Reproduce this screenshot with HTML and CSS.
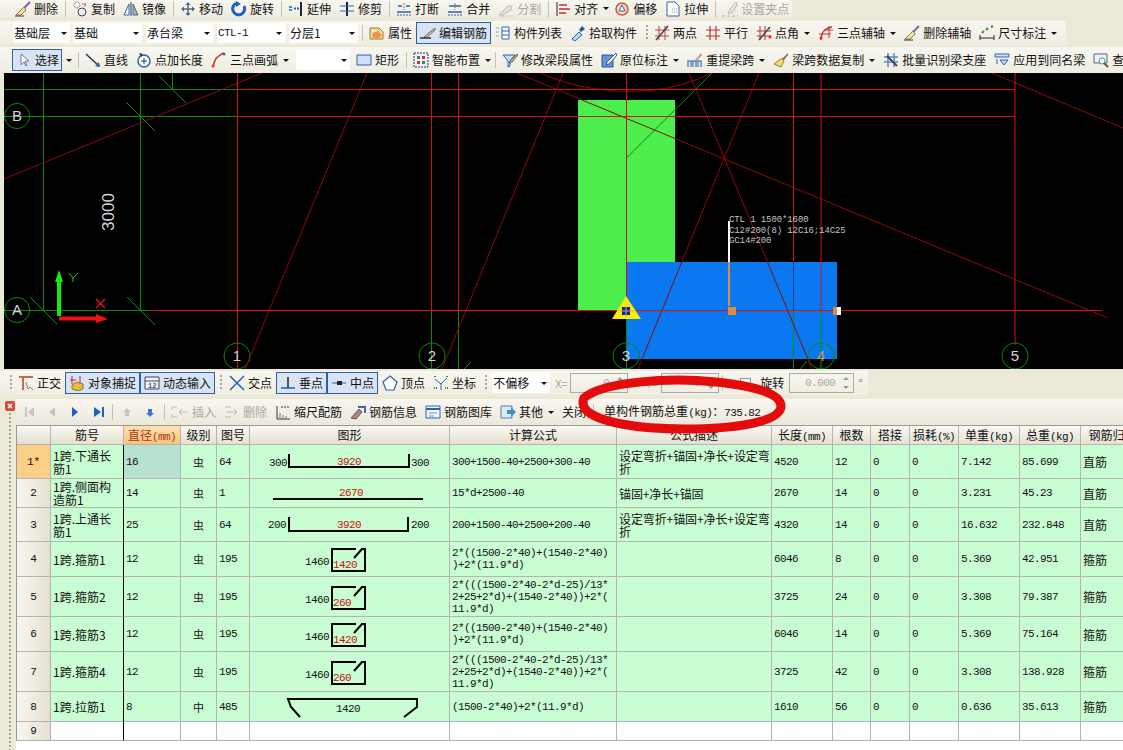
FILE: index.html
```html
<!DOCTYPE html>
<html lang="zh">
<head>
<meta charset="utf-8">
<title>钢筋编辑</title>
<link rel="stylesheet" href="styles.css">
</head>
<body>
<div class="app">

<div class="bar bar1">
  <span class="it"><svg class="ic" viewBox="0 0 16 16"><path d="M15 1L8 8" stroke="#7a5fb0" stroke-width="2"/><path d="M9 6l2 3-5 5-5 0z" fill="#f3e2a0" stroke="#8a7a40"/><path d="M0 15h9" stroke="#333"/></svg>删除</span><i class="sp"></i>
  <span class="it"><svg class="ic" viewBox="0 0 16 16"><circle cx="5" cy="4" r="3" fill="none" stroke="#777" stroke-dasharray="2 1"/><circle cx="10" cy="11" r="4" fill="none" stroke="#446"/><path d="M10 3h4l-2 3" fill="none" stroke="#c55"/></svg>复制</span>
  <span class="it"><svg class="ic" viewBox="0 0 16 16"><path d="M8 1v14" stroke="#333"/><path d="M6 3v11H1z" fill="#fff" stroke="#2a62b0"/><path d="M10 3v11h5z" fill="#9bb" stroke="#567"/></svg>镜像</span><i class="sp"></i>
  <span class="it"><svg class="ic" viewBox="0 0 16 16"><path d="M8 1l2.500 3h-5zM8 15l2.500-3h-5zM1 8l3-2.500v5zM15 8l-3-2.500v5z" fill="#2a62b0"/><path d="M8 3v10M3 8h10" stroke="#667" stroke-width="1.500"/></svg>移动</span>
  <span class="it"><svg class="ic" viewBox="0 0 16 16"><path d="M6 2A6 6 0 1 0 13 5" fill="none" stroke="#1f5fc0" stroke-width="3"/><path d="M5 0v6l5-3z" fill="#1f5fc0"/></svg>旋转</span><i class="sp"></i>
  <span class="it"><svg class="ic" viewBox="0 0 16 16"><path d="M13 1v14" stroke="#223" stroke-width="2"/><path d="M1 6h3M1 9h3" stroke="#1f5fc0" stroke-width="1.500"/><path d="M6 7.500h6" stroke="#1f5fc0" stroke-width="2" stroke-dasharray="2 1"/></svg>延伸</span>
  <span class="it"><svg class="ic" viewBox="0 0 16 16"><path d="M8 1v14" stroke="#223" stroke-width="2"/><path d="M1 5h14M1 10h14" stroke="#2a62b0"/></svg>修剪</span><i class="sp"></i>
  <span class="it"><svg class="ic" viewBox="0 0 16 16"><path d="M1 11h14M2 5h4M10 5h4" stroke="#2a62b0" stroke-width="1.500"/><path d="M1 14h14" stroke="#2a62b0" stroke-dasharray="2 1"/><path d="M8 2v7" stroke="#8a7a40" stroke-dasharray="2 1"/></svg>打断</span>
  <span class="it"><svg class="ic" viewBox="0 0 16 16"><path d="M1 11h14M2 5h12" stroke="#2a62b0" stroke-width="1.500"/><path d="M1 14h14" stroke="#2a62b0" stroke-dasharray="2 1"/><path d="M8 2v7" stroke="#8a7a40" stroke-dasharray="2 1"/></svg>合并</span>
  <span class="it off"><svg class="ic" viewBox="0 0 16 16"><path d="M1 14l9-9 4 0-1 4-9 5z" fill="#e4e2d6" stroke="#bbb"/><path d="M1 15h14" stroke="#bbb" stroke-dasharray="2 1"/></svg>分割</span><i class="sp"></i>
  <span class="it tight"><svg class="ic" viewBox="0 0 16 16"><path d="M2 1v14" stroke="#223"/><path d="M4 4h8M4 8h11M4 12h7" stroke="#b33" stroke-width="1.500"/></svg>对齐<b class="ar"></b></span>
  <span class="it"><svg class="ic" viewBox="0 0 16 16"><circle cx="8" cy="8" r="6" fill="#f3d8c0" stroke="#c75a3a" stroke-width="1.500"/><path d="M8 4l3 6H5z" fill="#fff" stroke="#3a6ab0"/></svg>偏移</span>
  <span class="it"><svg class="ic" viewBox="0 0 16 16"><path d="M2 1h8l4 4v10H2z" fill="#fff" stroke="#2a62b0"/><path d="M7 8h5M7 11h5" stroke="#889" stroke-dasharray="1 1"/></svg>拉伸</span><i class="sp"></i>
  <span class="it off"><svg class="ic" viewBox="0 0 16 16"><path d="M14 1L8 8l-2 5 5-2 4-7z" fill="#e8e6da" stroke="#bbb"/><path d="M0 15h16" stroke="#aaa" stroke-dasharray="3 2"/></svg>设置夹点</span>
</div>

<div class="bar bar2">
  <span class="combo c57">基础层<b class="ar"></b></span>
  <span class="combo c69">基础<b class="ar"></b></span>
  <span class="combo c67">承台梁<b class="ar"></b></span>
  <span class="combo c68"><em class="mono">CTL-1</em><b class="ar"></b></span>
  <span class="combo c69 last">分层1<b class="ar"></b></span>
  <i class="sp"></i>
  <span class="it"><svg class="ic" viewBox="0 0 16 16"><path d="M1 3h9l4 4v7H1z" fill="#f4dc9a" stroke="#a07a30"/><path d="M3 9l5-4 5 5-3 3H4z" fill="#e8964a"/><path d="M3 6h5" stroke="#fff"/></svg>属性</span>
  <span class="it on"><svg class="ic" viewBox="0 0 16 16"><path d="M15 3L5 11l-1 2 3-1L15 5z" fill="#c9c2e6" stroke="#765"/><path d="M0 13h11" stroke="#334" stroke-width="1.500"/></svg>编辑钢筋</span>
  <span class="it"><svg class="ic" viewBox="0 0 16 16"><path d="M1 3h3M1 7h3M1 11h3" stroke="#778" stroke-dasharray="1 1"/><path d="M7 2h7v12H7z" fill="#fff" stroke="#2a62b0"/><path d="M7 6h7M7 10h7" stroke="#2a62b0"/></svg>构件列表</span>
  <span class="it"><svg class="ic" viewBox="0 0 16 16"><path d="M2 14l7-7 3 3-7 6z" fill="#bcd6f2" stroke="#2a62b0"/><path d="M9 5l3-4 3 3-4 3z" fill="#24509a"/></svg>拾取构件</span>
  <i class="hd hd2"></i>
  <span class="it"><svg class="ic" viewBox="0 0 16 16"><path d="M5 1v14M11 1v14M1 5h14M1 11h14" stroke="#b44"/><path d="M2 15L14 1" stroke="#445" stroke-width="1.500"/></svg>两点</span>
  <span class="it"><svg class="ic" viewBox="0 0 16 16"><path d="M5 1v14M11 1v14M1 5h14M1 11h14" stroke="#b33" stroke-width="1.200"/></svg>平行</span>
  <span class="it"><svg class="ic" viewBox="0 0 16 16"><path d="M4 1v14M9 1v14M1 6h14M1 11h14" stroke="#b33"/><path d="M3 15L14 2" stroke="#445" stroke-width="1.500"/><circle cx="14" cy="12" r="1.500" fill="#e22"/></svg>点角<b class="ar"></b></span>
  <span class="it"><svg class="ic" viewBox="0 0 16 16"><path d="M3 15C3 8 7 3 14 2" fill="none" stroke="#b33" stroke-width="1.500"/><path d="M7 5h8M11 1v12M1 9h12" stroke="#b33"/><circle cx="3" cy="13" r="1.500" fill="#e22"/></svg>三点辅轴<b class="ar"></b></span>
  <span class="it"><svg class="ic" viewBox="0 0 16 16"><path d="M15 1L8 8" stroke="#7a5fb0" stroke-width="2"/><path d="M9 6l2 3-5 5-5 0z" fill="#f3e2a0" stroke="#8a7a40"/><path d="M0 15h9" stroke="#333"/></svg>删除辅轴</span>
  <span class="it"><svg class="ic" viewBox="0 0 16 16"><path d="M1 10v5M15 10v5M1 13h14" stroke="#223"/><path d="M3 8l2-2M7 5l2-2M12 2l2-1" stroke="#3a8a3a" stroke-width="2"/></svg>尺寸标注<b class="ar"></b></span>
</div>

<div class="bar bar3">
  <span class="it on sel"><svg class="ic" viewBox="0 0 16 16"><path d="M5 2v11l3-3 2 4 1-1-2-4h4z" fill="#fff" stroke="#778"/></svg>选择</span><span class="drop"><b class="ar"></b></span>
  <i class="sp"></i>
  <span class="it"><svg class="ic" viewBox="0 0 16 16"><path d="M1 2l13 12" stroke="#335" stroke-width="1.500"/><path d="M15 15l-5-1 4-4z" fill="#2a62b0"/></svg>直线</span>
  <span class="it"><svg class="ic" viewBox="0 0 16 16"><circle cx="8" cy="9" r="6" fill="#fff" stroke="#2a62b0" stroke-width="1.500"/><path d="M8 6v6M5 9h6" stroke="#334"/><path d="M3 1l4 1-2 3z" fill="#334"/></svg>点加长度</span>
  <span class="it"><svg class="ic" viewBox="0 0 16 16"><path d="M2 15C3 8 7 3 13 1" fill="none" stroke="#c33" stroke-width="1.500"/><circle cx="2" cy="14" r="1.500" fill="#e33"/><circle cx="13" cy="2" r="1.500" fill="#36a"/></svg>三点画弧<b class="ar"></b></span>
  <span class="combo c54"><b class="ar"></b></span>
  <span class="it"><svg class="ic" viewBox="0 0 16 16"><path d="M1 3h14v10H1z" fill="#cfe0f6" stroke="#2a62b0"/></svg>矩形</span><i class="sp"></i>
  <span class="it tight"><svg class="ic" viewBox="0 0 16 16"><path d="M1 1h14v14H1z" fill="#eef" stroke="#334" stroke-dasharray="2 1"/><path d="M4 4h3v3H4zM9 9h3v3H9z" fill="#3a8a3a"/><path d="M9 4h3v3H9zM4 9h3v3H4z" fill="#c33"/></svg>智能布置<b class="ar"></b></span><i class="sp"></i>
  <span class="it"><svg class="ic" viewBox="0 0 16 16"><path d="M1 3h12L8 9v5l-2 1V9z" fill="#bfe0f2" stroke="#2a62b0"/><path d="M15 2l-7 7-1 2 3-1 6-7z" fill="#c9b070" stroke="#765"/></svg>修改梁段属性</span>
  <span class="it"><svg class="ic" viewBox="0 0 16 16"><path d="M1 3h11v12H1z" fill="#6a96d6" stroke="#2a52a0"/><path d="M15 1L6 10l-1 3 3-1 8-9z" fill="#fff" stroke="#2a52a0"/></svg>原位标注<b class="ar"></b></span>
  <span class="it"><svg class="ic" viewBox="0 0 16 16"><path d="M1 15V9h3v6M6 15V9h3v6M11 15V9h3v6M1 9h13" fill="none" stroke="#5a8ac8" stroke-width="1.500"/><path d="M8 8l6-7 1 2-5 6z" fill="#c98"/></svg>重提梁跨<b class="ar"></b></span>
  <span class="it"><svg class="ic" viewBox="0 0 16 16"><path d="M15 1l-6 6 1 2 5-6z" fill="#667"/><path d="M9 6l2 3-3 6-7-3z" fill="#f3d86a" stroke="#9a8030"/></svg>梁跨数据复制<b class="ar"></b></span>
  <span class="it"><svg class="ic" viewBox="0 0 16 16"><path d="M1 5h14M1 10h14M5 1v14M11 1v14" stroke="#5a8ac8" stroke-width="1.500"/><path d="M4 4l10 10" stroke="#445" stroke-width="2"/></svg>批量识别梁支座</span>
  <span class="it"><svg class="ic" viewBox="0 0 16 16"><path d="M1 2h14v3H1z" fill="#cfe0f6" stroke="#2a62b0"/><path d="M6 8h8l-4 5z" fill="#bfe0f2" stroke="#2a62b0"/><path d="M3 7v5" stroke="#2a62b0"/></svg>应用到同名梁</span>
  <span class="it"><svg class="ic" viewBox="0 0 16 16"><path d="M1 2h13v9H1z" fill="#eef" stroke="#567"/><circle cx="9" cy="9" r="3" fill="#fff" stroke="#3a6"/><path d="M11 11l4 4" stroke="#654" stroke-width="2"/></svg>查</span>
</div>

<svg class="cad" viewBox="4 73 1119 296" width="1119" height="296">
  <rect x="578" y="100" width="97" height="210" fill="#4cee4c"/>
  <rect x="627" y="262" width="210" height="97" fill="#0a78f0"/>
  <g class="gr">
    <path d="M4 89.500H237M4 116.500H237M4 310.500H150M43.500 73V310M140.500 73V310"/>
    <path d="M431.500 310V369M458.500 310V369M626.500 310V369M793.500 310V369M821 310V369M172.500 73V89"/>
    <path d="M159 76L186 103M126 102L155 131M30 297L57 324M127 297L155 325M471 362L464 369M800 369L807 361"/>
    <path d="M626.500 158L712 73"/>
    <path d="M237 343a13 13 0 1 0 .1 0zM432 343a13 13 0 1 0 .1 0zM626 343a13 13 0 1 0 .1 0zM821 343a13 13 0 1 0 .1 0zM1015 343a13 13 0 1 0 .1 0zM17 297.500a12.500 12.500 0 1 0 .1 0zM17 103.500a12.500 12.500 0 1 0 .1 0z"/>
  </g>
  <g class="dk">
    <path d="M4 179L262 73M367 73L245 369M563 73L442 369M517 73L1108 318M992 73L1123 128M689 73L812 369M759 73L638 369"/>
    <path d="M540 73Q590 95 650 90.500Q680 88 712 73"/>
  </g>
  <g class="rd">
    <path d="M237 89.500H1015M237 116.500H1015M150 310.500H1102"/>
    <path d="M237.500 73V369M431.500 73V310M458.500 73V310M626.500 73V310M793.500 73V262M821 73V310M1015 73V345"/>
  </g>
  <path d="M793.500 262V310" stroke="#1c3a78"/>
  <path d="M729 221V262" stroke="#fff" stroke-width="2"/>
  <path d="M729 262V306" stroke="#e08a3c" stroke-width="2"/>
  <rect x="728" y="307" width="8" height="8" fill="#e08a3c"/>
  <rect x="833" y="307" width="4" height="8" fill="#e08a3c"/>
  <rect x="837" y="307" width="4" height="8" fill="#fff"/>
  <path d="M626 296L641 319H612z" fill="#ffee00"/>
  <rect x="622" y="307" width="8" height="8" fill="#1020c0"/>
  <path d="M620 311H634M626 305V317" stroke="#c8b040"/>
  <path d="M59 316V276" stroke="#11ee11" stroke-width="4"/>
  <path d="M59 270L63 282H55z" fill="#11ee11"/>
  <path d="M59 318.500H98" stroke="#ee1111" stroke-width="4"/>
  <path d="M108 319L96 314V323z" fill="#ee1111"/>
  <path d="M96 299L105 308M105 299L96 308" stroke="#f01010" stroke-width="1.300"/>
  <path d="M69 273L73 278L78 273M73 278V282" stroke="#11cc11" fill="none"/>
  <text class="cn" x="17" y="121">B</text>
  <text class="cn" x="17" y="315">A</text>
  <text class="cn" x="237" y="361">1</text>
  <text class="cn" x="432" y="361">2</text>
  <text class="cn" x="626" y="361">3</text>
  <text class="cn or" x="821" y="361">4</text>
  <text class="cn" x="1015" y="361">5</text>
  <text class="dim" transform="translate(114 212) rotate(-90)">3000</text>
  <text class="lab" x="729" y="222">CTL 1 1500*1600</text>
  <text class="lab" x="729" y="233">C12#200(8) 12C16;14C25</text>
  <text class="lab" x="729" y="243">GC14#200</text>
</svg>

<div class="snap">
  <div class="band">
    <i class="hd h0"></i>
    <span class="it"><svg class="ic" viewBox="0 0 16 16"><path d="M1 2h14M5 2v13" stroke="#c96a50" stroke-width="2"/><path d="M8 7l2 7 2-2 3 3" fill="none" stroke="#789"/></svg>正交</span>
    <span class="it on"><svg class="ic" viewBox="0 0 16 16"><path d="M3 1v8M1 5h6M11 1v8" stroke="#a33"/><path d="M3 10l5-3 6 2v5l-5 2-6-2z" fill="#e8b840" stroke="#96702a"/></svg>对象捕捉</span>
    <span class="it on"><svg class="ic" viewBox="0 0 16 16"><path d="M1 2h14v12H1z" fill="#eef" stroke="#445"/><path d="M1 6h14" stroke="#445"/><text class="tiny" x="4" y="13">12</text></svg>动态输入</span>
    <i class="hd"></i>
    <span class="it"><svg class="ic" viewBox="0 0 16 16"><path d="M1 1l14 14M15 1L1 15" stroke="#2a62b0" stroke-width="1.500"/></svg>交点</span>
    <span class="it on"><svg class="ic" viewBox="0 0 16 16"><path d="M1 13h14" stroke="#2a62b0" stroke-width="1.500"/><path d="M8 2v11" stroke="#223" stroke-width="1.500"/></svg>垂点</span>
    <span class="it on"><svg class="ic" viewBox="0 0 16 16"><path d="M1 8h14" stroke="#2a62b0"/><path d="M6 6h5v4H6z" fill="#223"/></svg>中点</span>
    <span class="it"><svg class="ic" viewBox="0 0 16 16"><path d="M8 1l7 6-3 8H4L1 7z" fill="#fff" stroke="#2a62b0" stroke-width="1.200"/></svg>顶点</span>
    <span class="it"><svg class="ic" viewBox="0 0 16 16"><path d="M8 9v6M8 9l6-6M8 9L2 4" stroke="#2a62b0"/><path d="M2 1v2M14 1v2M1 13h3M12 13h3" stroke="#3a8a3a" stroke-width="2" stroke-dasharray="1 1"/></svg>坐标</span>
    <i class="hd h3"></i>
    <span class="combo c58">不偏移<b class="ar"></b></span>
    <span class="lbl off">X=</span>
    <span class="spin s58"><em class="mono">0</em><u class="ud"></u></span>
    <span class="lbl off wy">Y=</span>
    <span class="spin s58"><em class="mono">0</em><u class="ud"></u></span>
    <i class="sp"></i>
    <span class="chk"></span>
    <span class="rot">旋转</span>
    <span class="spin s65"><em class="mono">0.000</em><u class="ud"></u></span>
    <span class="deg">°</span>
  </div>
</div>

<div class="lower">
  <div class="gutter"><svg class="close" viewBox="0 0 10 10" width="10" height="10"><rect width="10" height="10" rx="2" fill="#d84a3a"/><path d="M3 3l4 4M7 3l-4 4" stroke="#fff" stroke-width="1.500"/></svg><i class="dots"></i></div>
  <div class="main">
    <div class="tbar">
      <span class="nv"><svg class="ic" viewBox="0 0 16 16"><path d="M4 3h2v10H4zM13 3L7 8l6 5z" fill="#c4c6c8"/></svg></span>
      <span class="nv"><svg class="ic" viewBox="0 0 16 16"><path d="M11 3L5 8l6 5z" fill="#c4c6c8"/></svg></span>
      <span class="nv"><svg class="ic" viewBox="0 0 16 16"><path d="M5 3l6 5-6 5z" fill="#1f5fc0"/></svg></span>
      <span class="nv"><svg class="ic" viewBox="0 0 16 16"><path d="M12 3h2v10h-2zM4 3l7 5-7 5z" fill="#1f5fc0"/></svg></span>
      <i class="sp"></i>
      <span class="nv"><svg class="ic" viewBox="0 0 16 16"><path d="M8 4l4 4H10v4H6V8H4z" fill="#c4c6c8"/></svg></span>
      <span class="nv"><svg class="ic" viewBox="0 0 16 16"><path d="M8 13l4-4H10V5H6v4H4z" fill="#3f78d0"/></svg></span>
      <i class="sp"></i>
      <span class="it off"><svg class="ic wide" viewBox="0 0 18 16"><path d="M1 3h5M1 13h5M1 3v3M1 10v3" stroke="#bbb"/><path d="M8 8h9M11 5l-3 3 3 3" fill="none" stroke="#bbb"/></svg>插入</span>
      <span class="it off"><svg class="ic" viewBox="0 0 16 16"><path d="M1 3h6M1 13h6" stroke="#bbb"/><path d="M3 8h9M10 5l3 3-3 3" fill="none" stroke="#bbb"/></svg>删除</span>
      <span class="it"><svg class="ic" viewBox="0 0 16 16"><path d="M2 2v13h13" fill="none" stroke="#334"/><path d="M5 14V9M8 14v-3M11 14v-2" stroke="#778"/><path d="M6 3h8" stroke="#334" stroke-dasharray="2 1"/></svg>缩尺配筋</span>
      <span class="it"><svg class="ic" viewBox="0 0 16 16"><path d="M1 14L9 5l3 3-6 7z" fill="#a88" stroke="#654"/><path d="M8 3h7v6" fill="none" stroke="#3a6ab0" stroke-width="2"/></svg>钢筋信息</span>
      <span class="it"><svg class="ic" viewBox="0 0 16 16"><path d="M1 2h14v12H1z" fill="#eef6ff" stroke="#2a62b0"/><path d="M1 5h14" stroke="#2a62b0" stroke-width="2"/><path d="M4 9h8M4 12h5" stroke="#889"/></svg>钢筋图库</span>
      <span class="it"><svg class="ic" viewBox="0 0 16 16"><path d="M1 2h11v12H1z" fill="#dbe8f8" stroke="#5a7ab0"/><path d="M7 6h4V3l5 5-5 5v-3H7z" fill="#3f90d0"/></svg>其他<b class="ar"></b></span>
      <span class="it">关闭</span><i class="sp"></i>
      <span class="tot">单构件钢筋总重<small>(kg)</small>：<em class="mono">735.82</em></span>
    </div>
    <div class="tw">
      <table class="grid">
        <colgroup>
          <col class="c1"><col class="c2"><col class="c3"><col class="c4"><col class="c5"><col class="c6"><col class="c7"><col class="c8"><col class="c9"><col class="c10"><col class="c11"><col class="c12"><col class="c13"><col class="c14"><col class="c15">
        </colgroup>
        <thead>
          <tr><th></th><th>筋号</th><th class="cur">直径<small>(mm)</small></th><th>级别</th><th>图号</th><th>图形</th><th>计算公式</th><th>公式描述</th><th>长度<small>(mm)</small></th><th>根数</th><th>搭接</th><th>损耗<small>(%)</small></th><th>单重<small>(kg)</small></th><th>总重<small>(kg)</small></th><th>钢筋归类</th></tr>
        </thead>
        <tbody>
          <tr class="h34">
            <td class="rn act">1*</td><td class="nm">1跨.下通长筋1</td><td class="n dia">16</td><td class="g">虫</td><td class="n">64</td>
            <td class="sh"><svg class="fig" viewBox="0 0 199 33"><text class="fx" x="19" y="21">300</text><path class="bk" d="M39 9V22H159V9"/><text class="fx red mid" x="99" y="20">3920</text><text class="fx" x="161" y="21">300</text></svg></td>
            <td class="n">300+1500-40+2500+300-40</td><td class="ds">设定弯折+锚固+净长+设定弯<br>折</td><td class="n">4520</td><td class="n">12</td><td class="n">0</td><td class="n">0</td><td class="n">7.142</td><td class="n">85.699</td><td class="ds">直筋</td>
          </tr>
          <tr class="h29">
            <td class="rn">2</td><td class="nm">1跨.侧面构造筋1</td><td class="n">14</td><td class="g">虫</td><td class="n">1</td>
            <td class="sh"><svg class="fig" viewBox="0 0 199 28"><path class="bk" d="M23 20H173"/><text class="fx red mid" x="101" y="17">2670</text></svg></td>
            <td class="n">15*d+2500-40</td><td class="ds">锚固+净长+锚固</td><td class="n">2670</td><td class="n">14</td><td class="n">0</td><td class="n">0</td><td class="n">3.231</td><td class="n">45.23</td><td class="ds">直筋</td>
          </tr>
          <tr class="h34">
            <td class="rn">3</td><td class="nm">1跨.上通长筋1</td><td class="n">25</td><td class="g">虫</td><td class="n">64</td>
            <td class="sh"><svg class="fig" viewBox="0 0 199 33"><text class="fx" x="18" y="20">200</text><path class="bk" d="M39 9V23H158V9"/><text class="fx red mid" x="99" y="20">3920</text><text class="fx" x="161" y="20">200</text></svg></td>
            <td class="n">200+1500-40+2500+200-40</td><td class="ds">设定弯折+锚固+净长+设定弯<br>折</td><td class="n">4320</td><td class="n">14</td><td class="n">0</td><td class="n">0</td><td class="n">16.632</td><td class="n">232.848</td><td class="ds">直筋</td>
          </tr>
          <tr class="h35">
            <td class="rn">4</td><td class="nm">1跨.箍筋1</td><td class="n">12</td><td class="g">虫</td><td class="n">195</td>
            <td class="sh"><svg class="fig" viewBox="0 0 199 34"><text class="fx" x="55" y="23">1460</text><path class="bk" d="M106 7H82V29H115V7H111M104 16L112 7"/><text class="fx red" x="83" y="26">1420</text></svg></td>
            <td class="n">2*((1500-2*40)+(1540-2*40)<br>)+2*(11.9*d)</td><td class="ds"></td><td class="n">6046</td><td class="n">8</td><td class="n">0</td><td class="n">0</td><td class="n">5.369</td><td class="n">42.951</td><td class="ds">箍筋</td>
          </tr>
          <tr class="h40">
            <td class="rn">5</td><td class="nm">1跨.箍筋2</td><td class="n">12</td><td class="g">虫</td><td class="n">195</td>
            <td class="sh"><svg class="fig" viewBox="0 0 199 39"><text class="fx" x="55" y="26">1460</text><path class="bk" d="M106 10H82V32H115V10H111M104 19L112 10"/><text class="fx red" x="83" y="29">260</text></svg></td>
            <td class="n">2*(((1500-2*40-2*d-25)/13*<br>2+25+2*d)+(1540-2*40))+2*(<br>11.9*d)</td><td class="ds"></td><td class="n">3725</td><td class="n">24</td><td class="n">0</td><td class="n">0</td><td class="n">3.308</td><td class="n">79.387</td><td class="ds">箍筋</td>
          </tr>
          <tr class="h35">
            <td class="rn">6</td><td class="nm">1跨.箍筋3</td><td class="n">12</td><td class="g">虫</td><td class="n">195</td>
            <td class="sh"><svg class="fig" viewBox="0 0 199 34"><text class="fx" x="55" y="23">1460</text><path class="bk" d="M106 7H82V29H115V7H111M104 16L112 7"/><text class="fx red" x="83" y="26">1420</text></svg></td>
            <td class="n">2*((1500-2*40)+(1540-2*40)<br>)+2*(11.9*d)</td><td class="ds"></td><td class="n">6046</td><td class="n">14</td><td class="n">0</td><td class="n">0</td><td class="n">5.369</td><td class="n">75.164</td><td class="ds">箍筋</td>
          </tr>
          <tr class="h40">
            <td class="rn">7</td><td class="nm">1跨.箍筋4</td><td class="n">12</td><td class="g">虫</td><td class="n">195</td>
            <td class="sh"><svg class="fig" viewBox="0 0 199 39"><text class="fx" x="55" y="26">1460</text><path class="bk" d="M106 10H82V32H115V10H111M104 19L112 10"/><text class="fx red" x="83" y="29">260</text></svg></td>
            <td class="n">2*(((1500-2*40-2*d-25)/13*<br>2+25+2*d)+(1540-2*40))+2*(<br>11.9*d)</td><td class="ds"></td><td class="n">3725</td><td class="n">42</td><td class="n">0</td><td class="n">0</td><td class="n">3.308</td><td class="n">138.928</td><td class="ds">箍筋</td>
          </tr>
          <tr class="h30">
            <td class="rn">8</td><td class="nm">1跨.拉筋1</td><td class="n">8</td><td class="g">中</td><td class="n">485</td>
            <td class="sh"><svg class="fig" viewBox="0 0 199 29"><path class="bk" d="M50 25L41 15L38 7H167V15L154 25"/><text class="fx mid" x="98" y="20">1420</text></svg></td>
            <td class="n">(1500-2*40)+2*(11.9*d)</td><td class="ds"></td><td class="n">1610</td><td class="n">56</td><td class="n">0</td><td class="n">0</td><td class="n">0.636</td><td class="n">35.613</td><td class="ds">箍筋</td>
          </tr>
          <tr class="h19 blank">
            <td class="rn">9</td><td class="nm"></td><td></td><td></td><td></td><td></td><td></td><td></td><td></td><td></td><td></td><td></td><td></td><td></td><td></td>
          </tr>
        </tbody>
      </table>
    </div>
  </div>
</div>

<svg class="oval" viewBox="0 0 216 62" width="216" height="62"><path d="M8 24C26 8 92 3 140 8C180 12 206 20 205 33C203 48 160 55 108 55C60 55 22 48 10 36C7 32 6 28 8 24Z" fill="none" stroke="#e30b0b" stroke-width="9"/></svg>

</div>
</body>
</html>
```

FILE: styles.css
```css
* { box-sizing: border-box; }
html, body { margin: 0; padding: 0; background: #ece9d8; }
body { font: 12px/16px "Noto Sans CJK SC", "Liberation Sans", sans-serif; color: #111; }
.app { position: relative; width: 1123px; height: 750px; overflow: hidden; display: flex; flex-direction: column; }

.bar { display: flex; align-items: center; white-space: nowrap; background: linear-gradient(#f8f7f0, #efede1); }
.bar1 { height: 17px; width: 792px; padding-left: 11px; margin-bottom: 4px; border-radius: 0 0 3px 0; }
.bar2 { height: 24px; width: 1066px; padding-left: 13px; margin-bottom: 2px; border-radius: 3px; }
.bar3 { height: 26px; padding-left: 12px; }

.it { display: inline-flex; align-items: center; gap: 3px; padding: 0 4px; height: 16px; flex: none; }
.ic { width: 16px; height: 16px; flex: none; display: block; }
.ic.wide { width: 18px; }
.off { color: #a9a9a0; }
.on { background: #d8e4f4; outline: 1px solid #2f5fa8; outline-offset: -1px; height: 22px; }
.sel { padding: 0 3px 0 4px; margin-right: 1px; }
.drop { width: 12px; height: 22px; display: inline-flex; align-items: center; justify-content: center; flex: none; }
.drop .ar { margin-left: 0; }
.sp { width: 1px; height: 16px; background: #c5c2b0; margin: 0 2px 0 3px; flex: none; }
.tight { margin-right: -3px; }
.hd { width: 2px; height: 16px; flex: none; margin: 0 3px 0 5px; background: repeating-linear-gradient(#a8a698 0 2px, transparent 2px 4px); }
.hd2 { margin-right: 2px; }
.h0 { margin: 0 2px; }
.h3 { margin-right: 5px; }
.ar { display: inline-block; width: 0; height: 0; margin-left: 2px; border: 3px solid transparent; border-top: 3px solid #111; border-bottom: 0; flex: none; }

.combo { display: inline-flex; align-items: center; justify-content: space-between; height: 20px; background: #fff; padding: 0 3px 0 1px; margin-right: 3px; flex: none; }
.c54 { width: 54px; margin-left: 3px; margin-right: 2px; justify-content: flex-end; }
.c57 { width: 57px; }
.c58 { width: 58px; }
.c67 { width: 67px; margin-right: 4px; }
.c68 { width: 68px; margin-right: 4px; }
.c69 { width: 69px; margin-right: 4px; }
.last { margin-right: 1px; }
.mono { font: normal 11px/16px "Liberation Mono", monospace; letter-spacing: -.6px; }

.cad { display: block; flex: none; margin-left: 4px; background: #000; }
.gr path { stroke: #0d8a0d; fill: none; stroke-width: 1; }
.dk path { stroke: #8c0a0a; fill: none; stroke-width: 1; }
.rd path { stroke: #d61010; fill: none; stroke-width: 1; }
.cn { font: 15px "Liberation Sans", sans-serif; fill: #d4d4d4; text-anchor: middle; }
.or { fill: #c89860; }
.dim { font: 17px "Liberation Sans", sans-serif; fill: #d8d8d8; text-anchor: middle; }
.lab { font: 9px "Liberation Mono", monospace; fill: #c4c4c4; letter-spacing: -.1px; }
.tiny { font: 7px "Liberation Mono", monospace; fill: #111; }

.snap { flex: none; height: 30px; padding-top: 2px; }
.band { display: flex; align-items: center; height: 24px; width: 868px; padding-left: 8px; background: linear-gradient(#f8f7f0, #efede1); white-space: nowrap; }
.lbl { width: 12px; margin: 0 3px 0 2px; font-size: 11px; }
.wy { margin-left: 18px; }
.spin { position: relative; display: inline-flex; align-items: center; justify-content: flex-end; height: 20px; padding-right: 18px; border: 1px solid #aaa; color: #a9a9a0; flex: none; }
.s58 { width: 58px; }
.s65 { width: 65px; }
.ud { position: absolute; right: 3px; top: 3px; width: 8px; height: 12px; display: block; }
.ud::before, .ud::after { content: ""; position: absolute; left: 1px; border: 3px solid transparent; }
.ud::before { top: 0; border-top: 0; border-bottom: 3px solid #999; }
.ud::after { bottom: 0; border-bottom: 0; border-top: 3px solid #999; }
.chk { width: 11px; height: 11px; border: 1px solid #999; margin: 0 9px 0 15px; flex: none; }
.rot { margin-right: 5px; }
.deg { margin-left: 4px; color: #777; }

.lower { flex: 1; display: flex; min-height: 0; }
.gutter { width: 16px; flex: none; display: flex; flex-direction: column; align-items: center; padding: 2px 0 0 4px; gap: 2px; }
.close { display: block; flex: none; }
.dots { width: 2px; flex: 1; background: repeating-linear-gradient(#a8a698 0 2px, transparent 2px 4px); }
.main { flex: 1; min-width: 0; display: flex; flex-direction: column; }
.tbar { display: flex; align-items: center; height: 26px; flex: none; padding-left: 1px; white-space: nowrap; background: linear-gradient(#f8f7f0, #ebe8da); }
.nv { width: 23px; display: inline-flex; justify-content: center; flex: none; }
.tot { margin-left: 8px; flex: none; }
.tot small { font: 11px "Liberation Mono", monospace; letter-spacing: -.6px; }

.tw { flex: 1; overflow: hidden; background: #fff; }
.grid { border-collapse: separate; border-spacing: 0; table-layout: fixed; width: 1128px; border-top: 1px solid #9a9a9a; border-left: 1px solid #9a9a9a; }
.c1 { width: 34px; } .c2 { width: 73px; } .c3 { width: 57px; } .c4 { width: 36px; } .c5 { width: 33px; }
.c6 { width: 200px; } .c7 { width: 167px; } .c8 { width: 155px; } .c9 { width: 61px; } .c10 { width: 38px; }
.c11 { width: 39px; } .c12 { width: 49px; } .c13 { width: 61px; } .c14 { width: 61px; } .c15 { width: 64px; }
th, td { padding: 0 2px; border-right: 1px solid #b4b4b4; border-bottom: 1px solid #b4b4b4; overflow: hidden; white-space: nowrap; }
th { height: 19px; font-weight: normal; text-align: center; background: linear-gradient(#f9f8f2, #e4e1d2); line-height: 14px; }
th small { font: 11px "Liberation Mono", monospace; letter-spacing: -.6px; }
th.cur { color: #b5301c; background: linear-gradient(#fbe3b4, #f6c47a); }
td { background: #c9fed3; line-height: 12px; vertical-align: middle; }
.n { font: 11px/12px "Liberation Mono", monospace; letter-spacing: -.6px; }
.ds { font-size: 12px; line-height: 13px; letter-spacing: -.1px; }
.nm { white-space: normal; font-size: 12px; line-height: 13px; word-break: break-all; border-right: 1px solid #000; }
.g { text-align: center; font-size: 11px; }
.rn { text-align: center; background: linear-gradient(90deg, #f8f7f0, #e4e1d2); font: 11px "Liberation Mono", monospace; }
.act { background: #fbcf88; }
.dia { background: #b6e2cf; }
.sh { padding: 0; }
.fig { display: block; width: 199px; height: 100%; }
.bk { fill: none; stroke: #000; stroke-width: 2; }
.fx { font: 11px "Liberation Mono", monospace; fill: #111; letter-spacing: -.6px; }
.red { fill: #c81010; }
.mid { text-anchor: middle; }
.h34 td { height: 34px; } .h29 td { height: 29px; } .h35 td { height: 35px; }
.h40 td { height: 40px; } .h30 td { height: 30px; } .h19 td { height: 19px; }
.h34 .fig { height: 33px; } .h29 .fig { height: 28px; } .h35 .fig { height: 34px; }
.h40 .fig { height: 39px; } .h30 .fig { height: 29px; }
.blank td:not(.rn) { background: #fff; }

.oval { position: absolute; left: 576px; top: 374px; pointer-events: none; }
```
